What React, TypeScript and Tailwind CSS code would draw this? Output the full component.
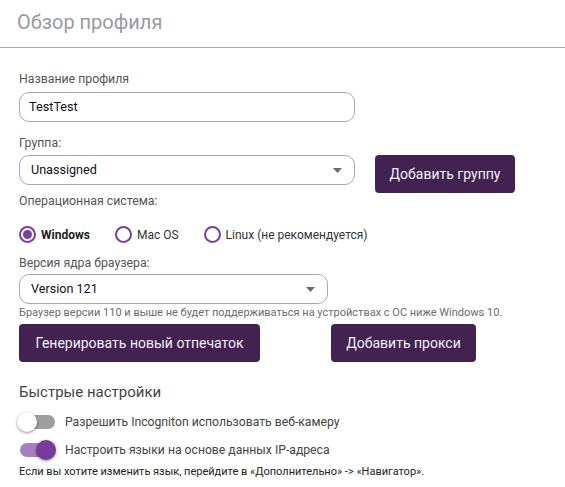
import React from "react";

const font = { fontFamily: "Roboto, 'Noto Sans', sans-serif" };

function Caret() {
  return (
    <svg width="9" height="5" viewBox="0 0 9 5" className="shrink-0">
      <path d="M0 0h9L4.5 5z" fill="#6b6b6b" />
    </svg>
  );
}

function Select({ value, width }: { value: string; width: string }) {
  return (
    <div
      className={`flex h-[30px] items-center justify-between rounded-[10px] border border-[#a9a9a9] bg-white pl-[11px] pr-[12px] text-[12.6px] text-[#111] ${width}`}
    >
      <span>{value}</span>
      <Caret />
    </div>
  );
}

function Radio({ label, checked }: { label: string; checked?: boolean }) {
  return (
    <label className="flex items-center gap-[5px]">
      <span className="flex h-[17px] w-[17px] items-center justify-center rounded-full border-2 border-[#7a3e9d]">
        {checked && <span className="h-[9px] w-[9px] rounded-full bg-[#7a3e9d]" />}
      </span>
      <span className={checked ? "font-bold text-[#222]" : "text-[#333]"}>{label}</span>
    </label>
  );
}

function Toggle({ on, label }: { on?: boolean; label: string }) {
  return (
    <div className="flex h-[20px] items-center">
      <div className="relative ml-[1px] h-[14px] w-[35px]">
        <div
          className={`h-full w-full rounded-full ${on ? "bg-[#a77fbd]" : "bg-[#9e9e9e]"}`}
        />
        <div
          className={`absolute top-[-3px] h-[20px] w-[20px] rounded-full shadow-[0_1px_3px_rgba(0,0,0,0.45)] ${
            on ? "right-[-1px] bg-[#773b98]" : "left-[-3px] bg-white"
          }`}
        />
      </div>
      <span className="ml-[10px] text-[12.2px] text-[#444]">{label}</span>
    </div>
  );
}

function Button({ children, className = "" }: { children: React.ReactNode; className?: string }) {
  return (
    <button
      className={`h-[38px] rounded-[4px] bg-[#432251] text-[14px] text-[#f2f0f8] ${className}`}
    >
      {children}
    </button>
  );
}

export default function App() {
  return (
    <div className="min-h-screen w-[565px] bg-white" style={font}>
      <div className="h-[48px] border-b border-[#a6a6b4] pl-[17px] pt-[10px] text-[20px] leading-[24px] text-[#9a9aa2]">
        Обзор профиля
      </div>

      <div className="flex flex-col px-[19px]">
        <div className="mt-[23px] text-[12.3px] leading-[16px] text-[#555]">Название профиля</div>
        <div className="mt-[5px] flex h-[30px] w-[336px] items-center rounded-[10px] border border-[#a9a9a9] px-[9px] text-[12.7px] text-[#111]">
          TestTest
        </div>

        <div className="mt-[13px] text-[12.3px] leading-[16px] text-[#555]">Группа:</div>
        <div className="mt-[4px] flex items-start">
          <Select value="Unassigned" width="w-[336px]" />
          <Button className="ml-[20px] w-[140px]">Добавить группу</Button>
        </div>

        <div className="text-[12.3px] leading-[16px] text-[#555]">Операционная система:</div>
        <div className="mt-[17px] flex items-center text-[12px] leading-[16px]">
          <Radio label="Windows" checked />
          <div className="ml-[25px]">
            <Radio label="Mac OS" />
          </div>
          <div className="ml-[25px]">
            <Radio label="Linux (не рекомендуется)" />
          </div>
        </div>

        <div className="mt-[12px] text-[12.3px] leading-[16px] text-[#555]">Версия ядра браузера:</div>
        <div className="mt-[3px]">
          <Select value="Version 121" width="w-[309px]" />
        </div>
        <div className="mt-[2px] text-[11px] leading-[14px] text-[#6b6b6b]">
          Браузер версии 110 и выше не будет поддерживаться на устройствах с ОС ниже Windows 10.
        </div>

        <div className="mt-[4px] flex">
          <Button className="w-[241px]">Генерировать новый отпечаток</Button>
          <Button className="ml-[71px] w-[145px]">Добавить прокси</Button>
        </div>

        <div className="mt-[20px] text-[15px] leading-[20px] text-[#444]">Быстрые настройки</div>
        <div className="mt-[10px]">
          <Toggle label="Разрешить Incogniton использовать веб-камеру" />
        </div>
        <div className="mt-[8px]">
          <Toggle on label="Настроить языки на основе данных IP-адреса" />
        </div>
        <div className="mt-[5px] text-[11px] leading-[14px] text-[#222]">
          Если вы хотите изменить язык, перейдите в «Дополнительно» -&gt; «Навигатор».
        </div>
      </div>
    </div>
  );
}
